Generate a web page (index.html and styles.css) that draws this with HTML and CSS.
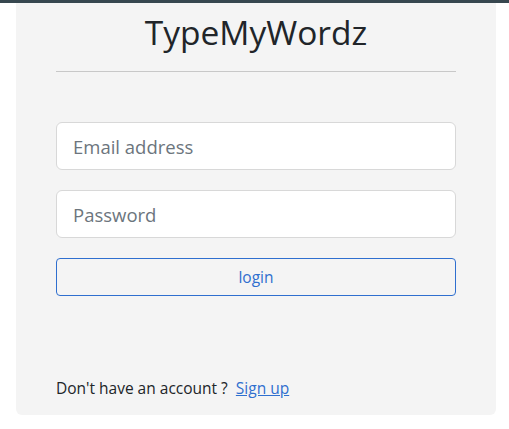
FILE: index.html
```html
<!DOCTYPE html>
<html lang="en">
<head>
<meta charset="utf-8">
<title>TypeMyWordz</title>
<link rel="stylesheet" href="styles.css">
</head>
<body>
<div class="topbar"></div>
<main class="wrap">
  <div class="card">
    <h1 class="title">TypeMyWordz</h1>
    <hr class="rule">
    <form class="form">
      <input class="field" type="email" placeholder="Email address">
      <input class="field" type="password" placeholder="Password">
      <button class="btn" type="button">login</button>
    </form>
    <p class="footer">Don't have an account ? &nbsp;<a class="link" href="#">Sign up</a></p>
  </div>
</main>
</body>
</html>
```
FILE: styles.css
```css
* { box-sizing: border-box; }
html, body { margin: 0; padding: 0; background: #fff; }
body { font-family: "Open Sans", "Noto Sans", sans-serif; color: #212529; }
.topbar { height: 3px; background: #37474f; }
.wrap { padding: 0 13px 0 16px; }
.card {
  background: #f4f4f4;
  border-radius: 0 0 6px 6px;
  padding: 1px 40px 0;
  height: 412px;
  display: flex;
  flex-direction: column;
}
.title {
  margin: 8px 0 0;
  text-align: center;
  font-weight: 400;
  font-size: 33.5px;
  line-height: 40px;
  color: #212529;
}
.rule { margin: 19px 0 0; border: 0; border-top: 1px solid #c8c8c8; }
.form { display: flex; flex-direction: column; gap: 20px; margin-top: 50px; }
.field {
  height: 48px;
  border: 1px solid #d8d8d8;
  border-radius: 6px;
  background: #fff;
  padding: 0 16px;
  font-family: inherit;
  font-size: 18.5px;
  color: #495057;
}
.field::placeholder { color: #6c757d; }
.btn {
  height: 38px;
  border: 1px solid #2f6fcf;
  border-radius: 4px;
  background: transparent;
  color: #2f6fcf;
  font-family: inherit;
  font-size: 15.5px;
}
.footer { margin: auto 0 17px; font-size: 15.5px; line-height: 20px; }
.link { color: #2f6fcf; text-decoration: underline; }
```
